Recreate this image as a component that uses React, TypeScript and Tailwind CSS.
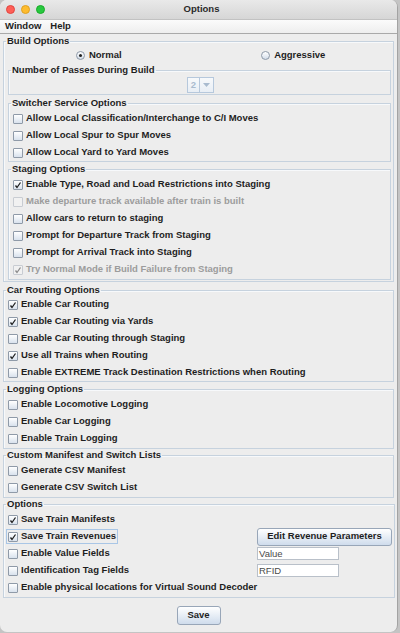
import React from "react";

type Item = { label: string; checked?: boolean; disabled?: boolean };

const SWITCHER: Item[] = [
  { label: "Allow Local Classification/Interchange to C/I Moves" },
  { label: "Allow Local Spur to Spur Moves" },
  { label: "Allow Local Yard to Yard Moves" },
];

const STAGING: Item[] = [
  { label: "Enable Type, Road and Load Restrictions into Staging", checked: true },
  { label: "Make departure track available after train is built", disabled: true },
  { label: "Allow cars to return to staging" },
  { label: "Prompt for Departure Track from Staging" },
  { label: "Prompt for Arrival Track into Staging" },
  { label: "Try Normal Mode if Build Failure from Staging", checked: true, disabled: true },
];

const ROUTING: Item[] = [
  { label: "Enable Car Routing", checked: true },
  { label: "Enable Car Routing via Yards", checked: true },
  { label: "Enable Car Routing through Staging" },
  { label: "Use all Trains when Routing", checked: true },
  { label: "Enable EXTREME Track Destination Restrictions when Routing" },
];

const LOGGING: Item[] = [
  { label: "Enable Locomotive Logging" },
  { label: "Enable Car Logging" },
  { label: "Enable Train Logging" },
];

const CUSTOM: Item[] = [
  { label: "Generate CSV Manifest" },
  { label: "Generate CSV Switch List" },
];

function CheckBox({ checked = false, disabled = false }: { checked?: boolean; disabled?: boolean }) {
  return (
    <span
      className={
        "w-[10px] h-[10px] shrink-0 rounded-[1px] border flex items-center justify-center " +
        (disabled
          ? "border-[#c8ccd2] bg-[#f1f1f1]"
          : "border-[#8f9aa8] bg-gradient-to-b from-[#ffffff] to-[#d9e2ed]")
      }
    >
      {checked && (
        <svg width="8" height="8" viewBox="0 0 8 8">
          <polyline
            points="1.5,4.5 3,6.5 6.5,1.5"
            fill="none"
            stroke={disabled ? "#8a8a8a" : "#1f1f1f"}
            strokeWidth="1.3"
          />
        </svg>
      )}
    </span>
  );
}

function Check({ item, focused = false }: { item: Item; focused?: boolean }) {
  return (
    <div className="h-[17px] flex items-center">
      <label
        className={
          "flex items-center gap-[3px] h-[11px] " +
          (focused ? "outline outline-1 outline-[#a9c6e6] outline-offset-[1px]" : "")
        }
      >
        <CheckBox checked={item.checked} disabled={item.disabled} />
        <span className={item.disabled ? "text-[#9c9c9c]" : "text-[#1e1e1e]"}>{item.label}</span>
      </label>
    </div>
  );
}

function Group({
  title,
  className = "",
  children,
}: {
  title: string;
  className?: string;
  children: React.ReactNode;
}) {
  return (
    <fieldset
      className={
        "border border-[#c6d2de] shadow-[inset_1px_1px_0_#f7f9fb] pl-[4px] pr-[2px] " + className
      }
    >
      <legend className="-ml-[2px] px-[1px] leading-[12px] text-[#1e1e1e]">{title}</legend>
      {children}
    </fieldset>
  );
}

function Radio({ label, selected = false }: { label: string; selected?: boolean }) {
  return (
    <div className="flex items-center gap-[4px]">
      <span className="w-[9px] h-[9px] rounded-full border border-[#8d99a8] bg-gradient-to-b from-[#ffffff] to-[#d3dde9] flex items-center justify-center">
        {selected && <span className="w-[3px] h-[3px] rounded-full bg-[#222]" />}
      </span>
      <span>{label}</span>
    </div>
  );
}

export default function App() {
  return (
    <div className="w-[400px] h-[633px] bg-[#c4c4c4] font-['Liberation_Sans',Arial,sans-serif] text-[9.5px] font-bold text-[#1e1e1e]">
      <div className="w-[398px] h-[632px] rounded-[7px] overflow-hidden flex flex-col bg-[#ededed] border-r border-[#a3a3a3]">
        {/* Title bar */}
        <div className="h-[20px] shrink-0 flex items-center px-[6px] bg-gradient-to-b from-[#e9e9e9] to-[#d6d6d6] border-b border-[#c2c2c2]">
          <div className="flex gap-[6px] w-[60px]">
            <span className="w-[9px] h-[9px] rounded-full bg-[#fe5f57] border border-[#e2463f]" />
            <span className="w-[9px] h-[9px] rounded-full bg-[#febc2e] border border-[#dfa023]" />
            <span className="w-[9px] h-[9px] rounded-full bg-[#28c840] border border-[#1aab29]" />
          </div>
          <div className="flex-1 text-center text-[#2a2a2a] pr-[54px]">Options</div>
        </div>

        {/* Menu bar */}
        <div className="h-[14px] shrink-0 flex items-center gap-[9px] px-[5px] bg-gradient-to-b from-[#fbfbfb] to-[#eeeeee] border-b border-[#a9a9a9]">
          <span>Window</span>
          <span>Help</span>
        </div>

        {/* Content */}
        <div className="flex-1 flex flex-col px-[3px] pt-[1px]">
          <Group title="Build Options" className="pb-[1px]">
            <div className="h-[17px] grid grid-cols-2 items-center">
              <div className="flex justify-center pr-[10px]">
                <Radio label="Normal" selected />
              </div>
              <div className="flex justify-center pr-[4px]">
                <Radio label="Aggressive" />
              </div>
            </div>
            <Group title="Number of Passes During Build" className="pt-[1px] pb-[1px]">
              <div className="flex justify-center">
                <div className="h-[16px] w-[27px] flex border border-[#b6c8dc] bg-gradient-to-b from-[#f7f9fb] to-[#e8eef5]">
                  <span className="w-[12px] text-center leading-[14px] text-[#a9bbcf] border-r border-[#b6c8dc]">
                    2
                  </span>
                  <span className="flex-1 flex items-center justify-center">
                    <svg width="7" height="4" viewBox="0 0 7 4">
                      <polygon points="0,0 7,0 3.5,4" fill="#a9bbcf" />
                    </svg>
                  </span>
                </div>
              </div>
            </Group>
            <Group title="Switcher Service Options" className="mt-[2px] pt-[1px]">
              {SWITCHER.map((it) => (
                <Check key={it.label} item={it} />
              ))}
            </Group>
            <Group title="Staging Options" className="mt-[1px] pt-[1px] pb-[1px]">
              {STAGING.map((it) => (
                <Check key={it.label} item={it} />
              ))}
            </Group>
          </Group>

          <Group title="Car Routing Options" className="mt-[2px]">
            {ROUTING.map((it) => (
              <Check key={it.label} item={it} />
            ))}
          </Group>

          <Group title="Logging Options" className="mt-[1px] pt-[1px] pb-[1px]">
            {LOGGING.map((it) => (
              <Check key={it.label} item={it} />
            ))}
          </Group>

          <Group title="Custom Manifest and Switch Lists" className="pt-[1px] pb-[1px]">
            {CUSTOM.map((it) => (
              <Check key={it.label} item={it} />
            ))}
          </Group>

          <Group title="Options" className="pt-[1px] pb-[1px]">
            <div className="grid grid-cols-[249px_1fr]">
              <Check item={{ label: "Save Train Manifests", checked: true }} />
              <div />
              <Check item={{ label: "Save Train Revenues", checked: true }} focused />
              <div className="h-[17px] flex items-center">
                <button className="h-[18px] w-[135px] rounded-[3px] border border-[#98a6b8] bg-gradient-to-b from-[#ffffff] to-[#cfdcec] text-[#1e1e1e]">
                  Edit Revenue Parameters
                </button>
              </div>
              <Check item={{ label: "Enable Value Fields" }} />
              <div className="h-[17px] flex items-center">
                <div className="h-[13px] w-[82px] border border-[#b9c0c9] bg-white font-normal text-[#4a4a4a] leading-[11px] pl-[1px]">
                  Value
                </div>
              </div>
              <Check item={{ label: "Identification Tag Fields" }} />
              <div className="h-[17px] flex items-center">
                <div className="h-[13px] w-[82px] border border-[#b9c0c9] bg-white font-normal text-[#4a4a4a] leading-[11px] pl-[1px]">
                  RFID
                </div>
              </div>
            </div>
            <Check item={{ label: "Enable physical locations for Virtual Sound Decoder" }} />
          </Group>

          <div className="flex justify-center pt-[8px]">
            <button className="h-[19px] w-[44px] rounded-[3px] border border-[#98a6b8] bg-gradient-to-b from-[#ffffff] to-[#cfdcec] text-[#1e1e1e]">
              Save
            </button>
          </div>
        </div>
      </div>
    </div>
  );
}
